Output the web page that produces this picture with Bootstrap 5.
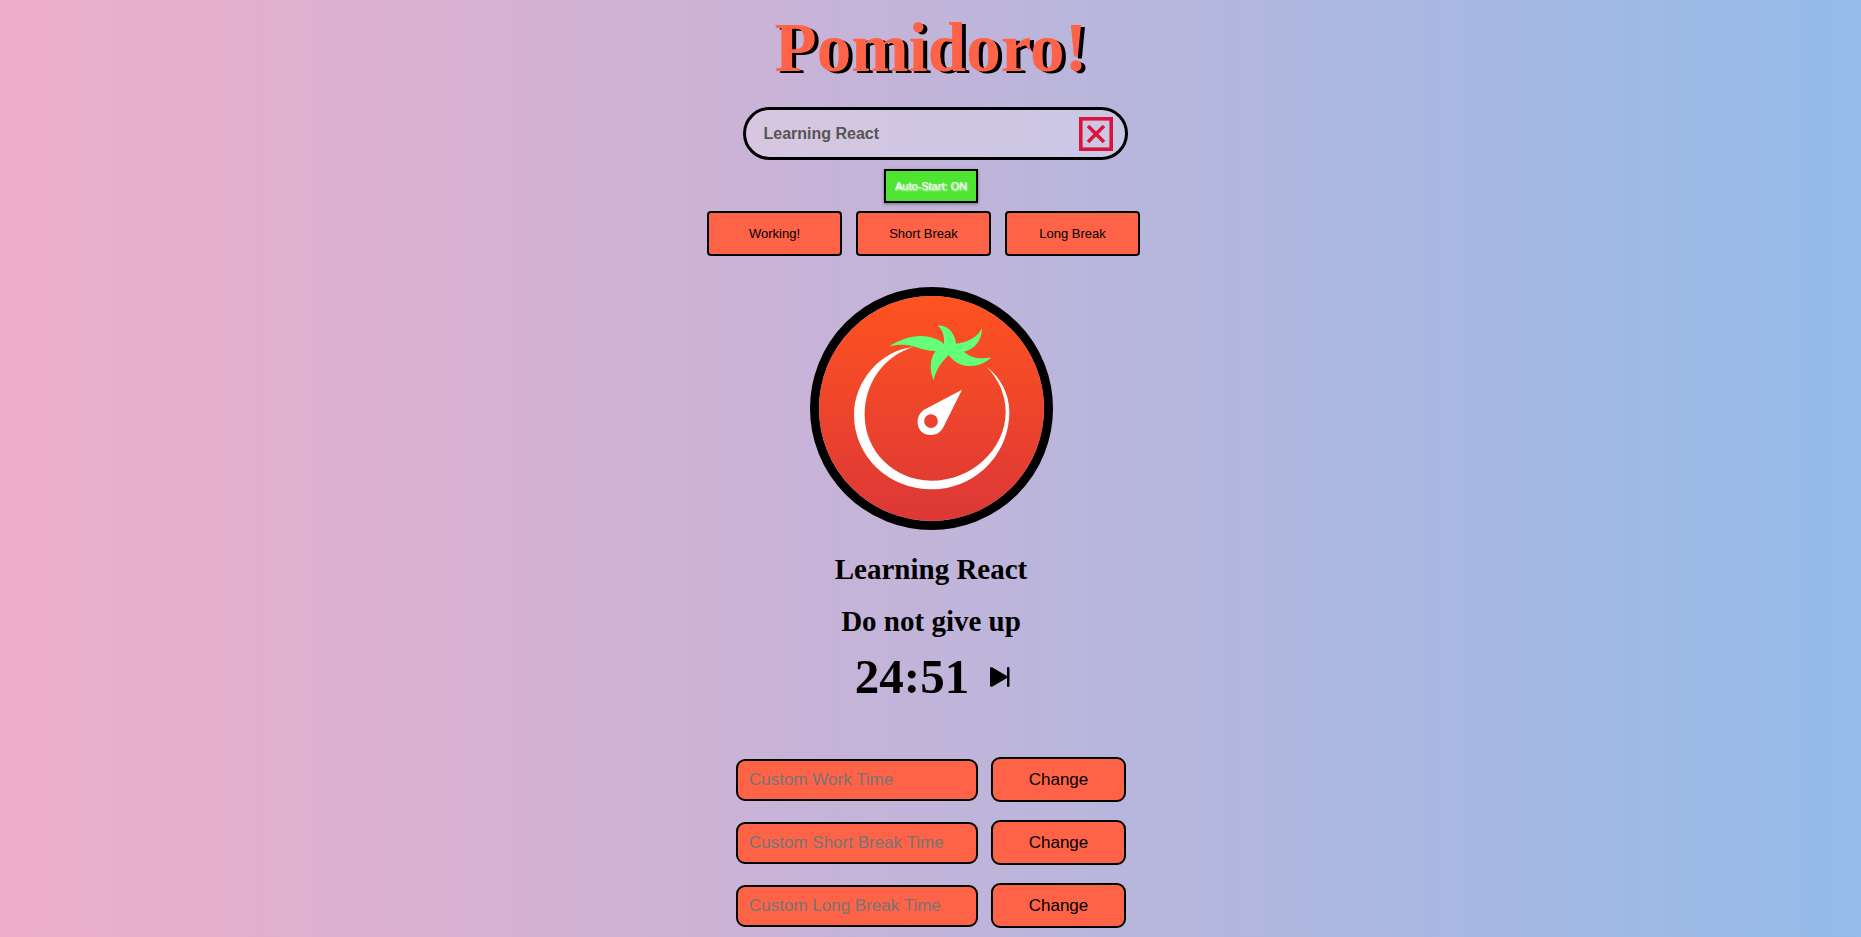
<!DOCTYPE html>
<html lang="en">
<head>
<meta charset="utf-8">
<meta name="viewport" content="width=device-width, initial-scale=1">
<title>Pomidoro!</title>
<link href="https://cdn.jsdelivr.net/npm/bootstrap@5.3.0/dist/css/bootstrap.min.css" rel="stylesheet">
<style>
  :root { --tomato: #ff6347; }
  body {
    background: linear-gradient(90deg, #eeaeca 0%, #94bbe9 100%);
    color: #000;
    font-family: "Liberation Sans", Arial, sans-serif;
  }
  main { padding-left: 1px; }
  .app-title, .app-line, .timer { font-family: "Liberation Serif", "Times New Roman", serif; font-weight: 700; }
  .app-title { font-size: 69px; line-height: 80px; color: var(--tomato); text-shadow: 4px 2px #000; margin: 8px 0 19px; }
  .task-box {
    width: 385px; height: 53px; max-width: 100%;
    margin-left: 8px; padding: 0 12px 0 18px;
    border: 3px solid #000; border-radius: 27px;
    background: rgba(255, 255, 255, .25);
  }
  .task-input { min-width: 0; border: 0; padding: 0; background: transparent; color: #555; font-size: 16px; font-weight: 700; outline: 0; }
  .icon-btn { border: 0; padding: 0; background: transparent; color: #000; line-height: 0; }
  .icon-btn.clear { color: crimson; }
  .auto-btn {
    width: 94px; height: 34px; margin: 9px 0 8px; padding: 0;
    border: 2px solid #000; background: #4fe332; color: #fff;
    font-size: 11px; text-shadow: 1px 1px 2px #fff; box-shadow: 0 1px 3px rgba(0, 0, 0, .4);
  }
  .mode-row { gap: 14px; padding-right: 15px; margin-bottom: 31px; }
  .tomato-btn { width: 135px; height: 45px; padding: 0; border: 2px solid #000; background: var(--tomato); color: #000; }
  .mode-row .tomato-btn { font-size: 13px; border-radius: 4px; }
  .logo { width: 243px; height: 243px; border: 9px solid #000; border-radius: 50%; margin-bottom: 23px; }
  .app-line { font-size: 29px; line-height: 32px; margin: 0 0 20px; }
  .timer { font-size: 49px; line-height: 56px; gap: 21px; margin: -8px 0 52px; padding-left: 3px; }
  .custom-form { gap: 18px; }
  .custom-row { gap: 13px; font-size: 17px; }
  .custom-row .tomato-btn { border-radius: 9px; }
  .custom-input { width: 242px; height: 42px; padding: 0 11px; border: 2px solid #000; border-radius: 9px; background: var(--tomato); color: #000; }
  .custom-input::placeholder { color: #757575; opacity: 1; }
</style>
</head>
<body>
<main class="d-flex flex-column align-items-center">
  <h1 class="app-title">Pomidoro!</h1>

  <div class="task-box d-flex align-items-center">
    <input class="task-input flex-grow-1" type="text" value="Learning React" aria-label="Current task">
    <button class="icon-btn clear" type="button" aria-label="Clear task">
      <svg width="34" height="34" viewBox="0 0 34 34" fill="none" stroke="currentColor">
        <rect x="1.800" y="1.800" width="30.400" height="30.400" stroke-width="3.600"/>
        <path d="M9 9l16 16M25 9L9 25" stroke-width="3.600"/>
      </svg>
    </button>
  </div>

  <button class="auto-btn" type="button">Auto-Start: ON</button>

  <div class="mode-row d-flex">
    <button class="tomato-btn" type="button">Working!</button>
    <button class="tomato-btn" type="button">Short Break</button>
    <button class="tomato-btn" type="button">Long Break</button>
  </div>

  <svg class="logo" viewBox="19 21 225 225" role="img" aria-label="Tomato timer">
    <defs>
      <linearGradient id="skin" x1="0" y1="0" x2="0" y2="1">
        <stop offset="0" stop-color="#ff5320"/>
        <stop offset="1" stop-color="#dc3737"/>
      </linearGradient>
    </defs>
    <circle cx="131.500" cy="133.500" r="114" fill="url(#skin)"/>
    <g transform="scale(.33333)">
      <path fill="#fff" d="M340 216C242 226 162 318 162 420C162 544 266 643 394 643C522 643 628 542 628 410C628 356 600 306 560 275C596 312 617 360 617 410C617 524 514 617 394 617C284 617 194 530 194 420C194 328 246 246 340 216Z"/>
      <path fill="#fff" fill-rule="evenodd" d="M486 344L372 404C342 424 346 479 393 480C412 480 423 470 430 457ZM393 418A20.500 20.500 0 1 1 392.900 418Z"/>
      <path fill="#63ff78" d="M267 214C300 194 334 182 366 183C394 184 416 193 432 207C434 188 430 165 413 152C444 148 466 178 468 206C504 203 533 186 546 160C546 197 523 224 492 230C510 247 540 255 574 247C554 268 525 276 497 272C474 269 459 256 446 240C424 261 408 284 401 316C388 287 389 251 407 228C374 229 350 214 321 210C303 208 285 210 267 214Z"/>
    </g>
  </svg>

  <h2 class="app-line">Learning React</h2>
  <h2 class="app-line">Do not give up</h2>

  <div class="timer d-flex align-items-center">
    <span>24:51</span>
    <button class="icon-btn" type="button" aria-label="Skip">
      <svg width="20" height="20" viewBox="0 0 20 20" fill="currentColor">
        <path d="M0 1.500Q0 0 2 .3L17 9V1Q17 0 18.200 0T19.500 1V19Q19.500 20 18.200 20T17 19V11L2 19.700Q0 20 0 18.500Z"/>
      </svg>
    </button>
  </div>

  <form class="custom-form d-flex flex-column">
    <div class="custom-row d-flex align-items-center">
      <input class="custom-input" type="text" placeholder="Custom Work Time" aria-label="Custom Work Time">
      <button class="tomato-btn" type="button">Change</button>
    </div>
    <div class="custom-row d-flex align-items-center">
      <input class="custom-input" type="text" placeholder="Custom Short Break Time" aria-label="Custom Short Break Time">
      <button class="tomato-btn" type="button">Change</button>
    </div>
    <div class="custom-row d-flex align-items-center">
      <input class="custom-input" type="text" placeholder="Custom Long Break Time" aria-label="Custom Long Break Time">
      <button class="tomato-btn" type="button">Change</button>
    </div>
  </form>
</main>
<script src="https://cdn.jsdelivr.net/npm/bootstrap@5.3.0/dist/js/bootstrap.bundle.min.js"></script>
</body>
</html>
